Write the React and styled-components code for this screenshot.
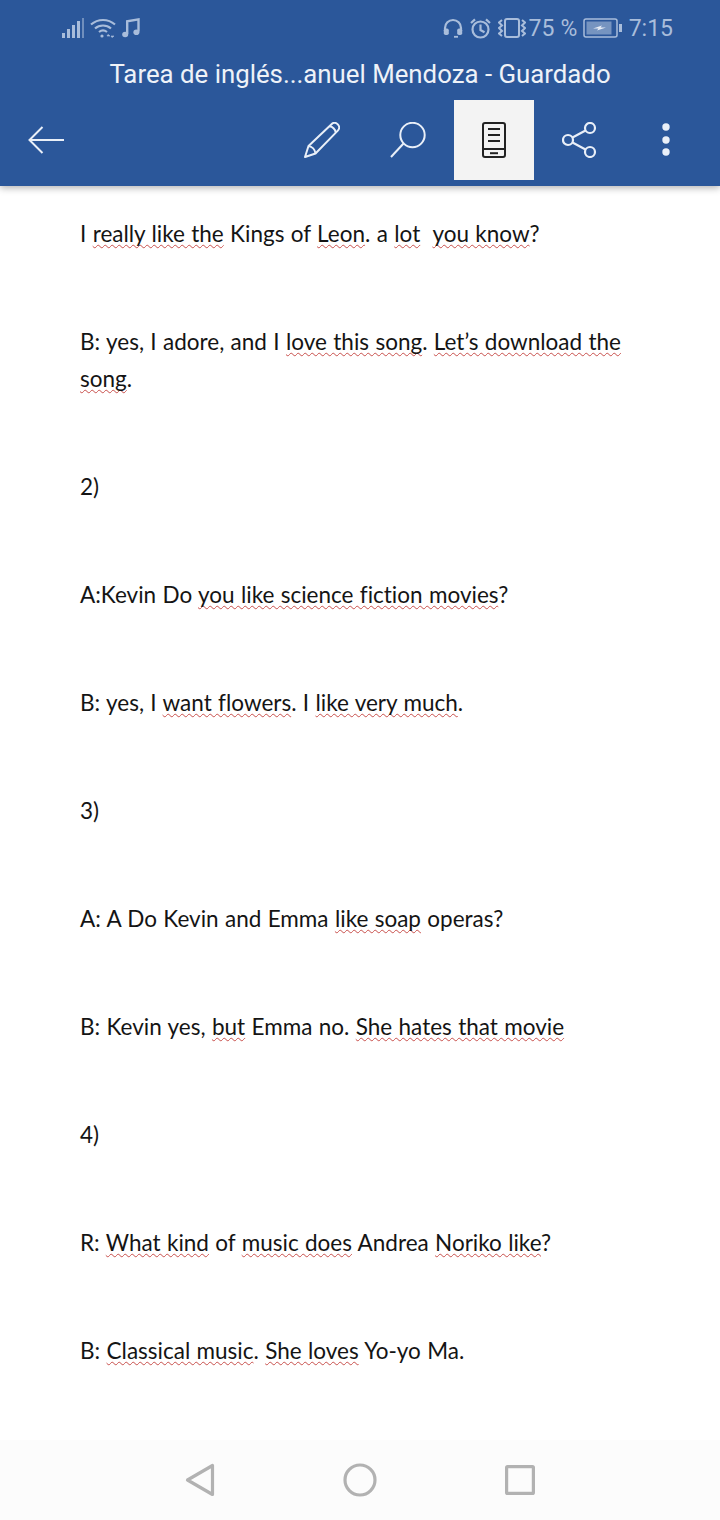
import React from 'react';
import styled, { createGlobalStyle } from 'styled-components';

const Global = createGlobalStyle`
  html, body { margin: 0; padding: 0; background: #fff; }
  * { box-sizing: border-box; }
`;

const Page = styled.div`
  width: 720px;
  height: 1520px;
  display: flex;
  flex-direction: column;
  overflow: hidden;
  background: #fff;
`;

const Header = styled.header`
  height: 186px;
  flex: none;
  background: #2b579a;
  box-shadow: 0 2px 7px rgba(0, 0, 0, 0.3);
  position: relative;
  z-index: 2;
`;

const StatusBar = styled.div`
  height: 56px;
  padding: 0 47px 0 62px;
  display: flex;
  align-items: center;
  justify-content: space-between;
  color: #a9bddb;
  font-family: Roboto, sans-serif;
  font-size: 23px;
`;

const StatusGroup = styled.div`
  display: flex;
  align-items: center;
  gap: ${props => props.gap || 6}px;
`;

const Percent = styled.span`
  margin-left: -5px;
  margin-right: -2px;
  letter-spacing: 0.2px;
`;

const Title = styled.div`
  height: 38px;
  padding-bottom: 2px;
  display: flex;
  align-items: center;
  justify-content: center;
  color: #eef2f8;
  font-family: Roboto, sans-serif;
  font-size: 25.8px;
`;

const Toolbar = styled.div`
  height: 80px;
  margin-top: 6px;
  display: flex;
  align-items: center;
  padding-right: 11px;
  color: #e9eff8;
`;

const BackSlot = styled.div`
  width: 92px;
  height: 80px;
  display: flex;
  align-items: center;
  justify-content: center;
  margin-right: auto;
`;

const Slot = styled.div`
  width: 86px;
  height: 80px;
  display: flex;
  align-items: center;
  justify-content: center;
`;

const ActiveTile = styled.div`
  width: 80px;
  height: 80px;
  background: #f3f3f3;
  color: #222;
  display: flex;
  align-items: center;
  justify-content: center;
`;

const Doc = styled.main`
  flex: 1;
  overflow: hidden;
  padding: 29px 80px 0;
  font-family: Lato, sans-serif;
  font-size: 22.5px;
  line-height: 37px;
  word-spacing: 0.6px;
  font-variant-ligatures: none;
  color: #141414;
`;

const Para = styled.p`
  margin: 0 0 71px;
  white-space: pre-wrap;
`;

const Spell = styled.span`
  text-decoration: underline wavy #c8504c 1.25px;
  text-underline-offset: 2px;
  text-decoration-skip-ink: none;
`;

const NavBar = styled.nav`
  height: 80px;
  flex: none;
  background: #fcfcfc;
  display: flex;
  align-items: center;
  justify-content: center;
  gap: 0;
`;

const NavSlot = styled.div`
  width: 160px;
  display: flex;
  justify-content: center;
`;

const Signal = () => (
  <svg width="22" height="20" viewBox="0 0 22 20" fill="currentColor">
    <rect x="0" y="15" width="3" height="5" />
    <rect x="5" y="11" width="3" height="9" />
    <rect x="10" y="7" width="3" height="13" />
    <rect x="15" y="3" width="3" height="17" />
    <rect x="20" y="0" width="2" height="20" opacity="0.55" />
  </svg>
);

const Wifi = () => (
  <svg width="26" height="20" viewBox="0 0 26 20" fill="none" stroke="currentColor" strokeWidth="2.2">
    <path d="M1 6.5C8 0.5 18 0.5 25 6.5" />
    <path d="M5 10.5C9.5 6.5 16.5 6.5 21 10.5" />
    <path d="M9 14C11.5 12 14.5 12 17 14" />
    <circle cx="12" cy="18" r="1.6" fill="currentColor" stroke="none" />
    <path d="M17 18h3l-2 -1.6zM21 18h3l-2 1.6z" fill="currentColor" strokeWidth="0.6" />
  </svg>
);

const Music = () => (
  <svg width="18" height="20" viewBox="0 0 18 20" fill="none" stroke="currentColor" strokeWidth="2.4">
    <path d="M5.2 16V3.2L16.5 1.4V13.5" />
    <ellipse cx="3.2" cy="16.5" rx="3" ry="2.8" fill="currentColor" stroke="none" />
    <ellipse cx="14.4" cy="14.2" rx="3" ry="2.8" fill="currentColor" stroke="none" />
  </svg>
);

const Headset = () => (
  <svg width="20" height="20" viewBox="0 0 20 20" fill="none" stroke="currentColor" strokeWidth="2.2">
    <path d="M2 13V10a8 8 0 0 1 16 0v3" />
    <rect x="0.8" y="10.5" width="5" height="6.5" rx="1.8" fill="currentColor" stroke="none" />
    <rect x="14.2" y="10.5" width="5" height="6.5" rx="1.8" fill="currentColor" stroke="none" />
    <path d="M15 18.8h-4" strokeWidth="1.8" />
  </svg>
);

const Alarm = () => (
  <svg width="21" height="21" viewBox="0 0 21 21" fill="none" stroke="currentColor" strokeWidth="2.2">
    <circle cx="10.5" cy="11.5" r="8" />
    <path d="M10.5 6.5v5.5l4 2.2" />
    <path d="M1 5L5 1.4M20 5L16 1.4" />
  </svg>
);

const Vibrate = () => (
  <svg width="28" height="20" viewBox="0 0 28 20" fill="none" stroke="currentColor" strokeWidth="2">
    <rect x="7" y="1" width="14" height="18" rx="2" />
    <path d="M4 2L1 4.5L4 7.5L1 10L4 13L1 15.5L4 18" />
    <path d="M24 2L27 4.5L24 7.5L27 10L24 13L27 15.5L24 18" />
  </svg>
);

const Battery = () => (
  <svg width="39" height="20" viewBox="0 0 39 20" fill="none">
    <rect x="1" y="1" width="33" height="18" rx="2" stroke="currentColor" strokeWidth="1.5" />
    <rect x="3.5" y="3.5" width="25" height="13" fill="currentColor" opacity="0.6" />
    <rect x="36" y="6" width="3" height="8" fill="currentColor" />
    <path d="M10 10.5L19 7.5L17.5 9.5L23 9.5L14 12.5L15.5 10.5z" fill="#e6ecf5" />
  </svg>
);

const ArrowIcon = () => (
  <svg width="36" height="28" viewBox="0 0 36 28" fill="none" stroke="currentColor" strokeWidth="2">
    <path d="M36 14H1.5" />
    <path d="M14.5 1L1.5 14L14.5 27" />
  </svg>
);

const PencilIcon = () => (
  <svg width="36" height="36" viewBox="0 0 36 36" fill="none" stroke="currentColor" strokeWidth="2" strokeLinejoin="round">
    <path d="M1 35L4.5 24L27.5 2.2C29.4 0.4 32 0.6 33.8 2.4C35.6 4.2 35.6 6.8 33.8 8.6L11.5 31.5z" />
    <path d="M4.5 24C8 24.5 11 27.5 11.5 31.5" />
    <path d="M25.5 4.2C28.5 4.7 31 7.2 31.8 10.4" />
  </svg>
);

const SearchIcon = () => (
  <svg width="36" height="36" viewBox="0 0 36 36" fill="none" stroke="currentColor" strokeWidth="2">
    <circle cx="22.5" cy="13" r="12.2" />
    <path d="M13.5 21.5L1 35" />
  </svg>
);

const ReaderIcon = () => (
  <svg width="24" height="36" viewBox="0 0 24 36" fill="none" stroke="currentColor" strokeWidth="2">
    <rect x="1" y="1" width="22" height="34" rx="2" />
    <path d="M1 27H23" />
    <path d="M6 7H18M6 13H18M6 19H18" />
    <path d="M8 31.2H16" />
  </svg>
);

const ShareIcon = () => (
  <svg width="36" height="36" viewBox="0 0 36 36" fill="none" stroke="currentColor" strokeWidth="2.2">
    <circle cx="28" cy="6" r="5" />
    <circle cx="6" cy="18" r="5" />
    <circle cx="28" cy="30" r="5" />
    <path d="M10.5 15.5L23.5 8.5M10.5 20.5L23.5 27.5" />
  </svg>
);

const DotsIcon = () => (
  <svg width="8" height="36" viewBox="0 0 8 36" fill="currentColor">
    <circle cx="4" cy="5" r="3.7" />
    <circle cx="4" cy="18" r="3.7" />
    <circle cx="4" cy="30" r="3.7" />
  </svg>
);

const NavBack = () => (
  <svg width="30" height="34" viewBox="0 0 30 34" fill="none" stroke="#b2b2b2" strokeWidth="3.2" strokeLinejoin="round">
    <path d="M27.5 2.5V31.5L2.5 17z" />
  </svg>
);

const NavHome = () => (
  <svg width="34" height="34" viewBox="0 0 34 34" fill="none" stroke="#b2b2b2" strokeWidth="3.2">
    <circle cx="17" cy="17" r="15" />
  </svg>
);

const NavRecent = () => (
  <svg width="30" height="30" viewBox="0 0 30 30" fill="none" stroke="#b2b2b2" strokeWidth="3.2" strokeLinejoin="round">
    <rect x="1.6" y="1.6" width="26.8" height="26.8" rx="1" />
  </svg>
);

// [text, misspelled] chunks for each paragraph
const paragraphs = [
  [['I '], ['really like the', 1], [' Kings of '], ['Leon', 1], ['. a '], ['lot', 1], ['  '], ['you know', 1], ['?']],
  [['B: yes, I adore, and I '], ['love this song', 1], ['. '], ['Let’s download the', 1], [' '], ['song', 1], ['.']],
  [['2)']],
  [['A:Kevin Do '], ['you like science fiction movies', 1], ['?']],
  [['B: yes, I '], ['want flowers', 1], ['. I '], ['like very much', 1], ['.']],
  [['3)']],
  [['A: A Do Kevin and Emma '], ['like soap', 1], [' operas?']],
  [['B: Kevin yes, '], ['but', 1], [' Emma no. '], ['She hates that movie', 1]],
  [['4)']],
  [['R: '], ['What kind', 1], [' of '], ['music does', 1], [' Andrea '], ['Noriko like', 1], ['?']],
  [['B: '], ['Classical music', 1], ['. '], ['She loves', 1], [' Yo-yo Ma.']],
];

const App = () => (
  <Page>
    <Global />
    <Header>
      <StatusBar>
        <StatusGroup gap={6}>
          <Signal />
          <Wifi />
          <Music />
        </StatusGroup>
        <StatusGroup gap={7}>
          <Headset />
          <Alarm />
          <Vibrate />
          <Percent>75 %</Percent>
          <Battery />
          <span>7:15</span>
        </StatusGroup>
      </StatusBar>
      <Title>Tarea de inglés...anuel Mendoza - Guardado</Title>
      <Toolbar>
        <BackSlot><ArrowIcon /></BackSlot>
        <Slot><PencilIcon /></Slot>
        <Slot><SearchIcon /></Slot>
        <Slot><ActiveTile><ReaderIcon /></ActiveTile></Slot>
        <Slot><ShareIcon /></Slot>
        <Slot><DotsIcon /></Slot>
      </Toolbar>
    </Header>
    <Doc>
      {paragraphs.map((chunks, i) => (
        <Para key={i}>
          {chunks.map(([text, bad], j) => (bad ? <Spell key={j}>{text}</Spell> : <span key={j}>{text}</span>))}
        </Para>
      ))}
    </Doc>
    <NavBar>
      <NavSlot><NavBack /></NavSlot>
      <NavSlot><NavHome /></NavSlot>
      <NavSlot><NavRecent /></NavSlot>
    </NavBar>
  </Page>
);

export default App;
